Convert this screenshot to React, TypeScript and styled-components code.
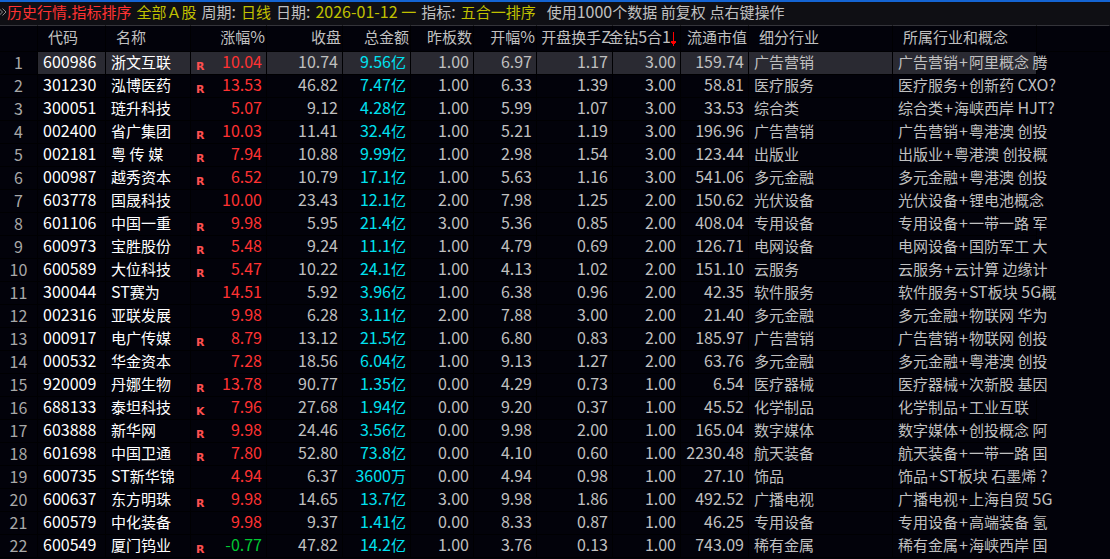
import React from "react";
import styled, { createGlobalStyle } from "styled-components";

const GlobalStyle = createGlobalStyle`
  * { box-sizing: border-box; }
  body {
    margin: 0;
    background: #02020a;
    color: #c0c0c0;
    font-family: "Noto Sans CJK SC", "Liberation Sans", sans-serif;
    font-size: 15px;
  }
`;

const Screen = styled.main`
  min-height: 100vh;
  border-top: 2px solid #1464d2;
  overflow: hidden;
`;

const TitleBar = styled.header`
  display: flex;
  gap: 5px;
  padding: 1px 0 4px;
  background: #0f0f14;
  line-height: 18px;
  white-space: nowrap;
`;

const Title = styled.h1`
  display: flex;
  margin: 0;
  color: #ff3232;
  font-size: 15px;
  font-weight: 400;
`;

const Chevrons = styled.svg`
  width: 7px;
  height: 8px;
  margin-top: 5px;
`;

const Label = styled.span``;

const Value = styled.span`
  color: #c0c000;
`;

const Hint = styled.span`
  margin-left: 6px;
`;

const Table = styled.table`
  width: 100%;
  table-layout: fixed;
  border-collapse: separate;
  border-spacing: 0;
`;

const Col = styled.col<{ $width?: number }>`
  width: ${(p) => (p.$width ? `${p.$width}px` : "auto")};
`;

type Align = "start" | "end";

const HeadCell = styled.th`
  padding: 0 0 4px;
  border-top: 1px solid #34343a;
  border-right: 1px solid #000002;
  border-bottom: 1px solid #000002;
  font-weight: 400;
  line-height: 21px;
  &:last-child { border-right-color: transparent; }
`;

const HeadLabel = styled.div<{ $align: Align }>`
  display: flex;
  align-items: center;
  justify-content: flex-${(p) => p.$align};
  padding: ${(p) => (p.$align === "start" ? "0 0 0 10px" : "0 1px 0 0")};
  white-space: nowrap;
`;

const SortArrow = styled.svg`
  width: 7px;
  height: 14px;
  flex: none;
  margin: 4px 1px 0 0;
`;

const Cell = styled.td<{ $align?: Align; $color?: string }>`
  padding: 1px 4px 3px 5px;
  border-right: 1px solid #000002;
  border-bottom: 1px solid #000002;
  color: ${(p) => p.$color || "#c0c0c0"};
  text-align: ${(p) => p.$align || "end"};
  line-height: 18px;
  white-space: nowrap;
`;

const IndexCell = styled.th`
  padding: 2px 0;
  border-right: 1px solid #000002;
  border-bottom: 1px solid #000002;
  color: #a8a8a8;
  font-weight: 400;
  text-align: center;
  line-height: 18px;
`;

const FillCell = styled.td``;

const Row = styled.tr<{ $selected: boolean }>`
  ${Cell} {
    background: ${(p) => (p.$selected ? "#2a2a32" : "transparent")};
  }
`;

const ChangeBox = styled.div`
  display: flex;
  justify-content: space-between;
`;

const Mark = styled.span`
  height: 18px;
  padding-top: 6px;
  color: #ff5050;
  font: bold 11px/16px "DejaVu Sans", sans-serif;
`;

const Latin = styled.span`
  font-size: 16px;
  line-height: 0;
`;

const Plus = styled(Latin)`
  margin: 0 1px;
`;

// Latin letters and digits are set one size larger than the Chinese text.
function Mixed({ text }: { text: string }) {
  const runs = text.match(/\+|[\x20-\x2a\x2c-\x7e]+|[^\x20-\x7e]+/g) || [];
  return (
    <>
      {runs.map((run, i) =>
        run === "+" ? (
          <Plus key={i}>+</Plus>
        ) : /[\x20-\x7e]/.test(run) ? (
          <Latin key={i}>{run}</Latin>
        ) : (
          <React.Fragment key={i}>{run}</React.Fragment>
        )
      )}
    </>
  );
}

const columns: { label: string; width?: number; align: Align; sorted?: boolean }[] = [
  { label: "", width: 38, align: "end" },
  { label: "代码", width: 68, align: "start" },
  { label: "名称", width: 85, align: "start" },
  { label: "涨幅%", width: 76, align: "end" },
  { label: "收盘", width: 76, align: "end" },
  { label: "总金额", width: 68, align: "end" },
  { label: "昨板数", width: 63, align: "end" },
  { label: "开幅%", width: 63, align: "end" },
  { label: "开盘换手Z", width: 76, align: "end" },
  { label: "金钻5合1", width: 68, align: "end", sorted: true },
  { label: "流通市值", width: 68, align: "end" },
  { label: "细分行业", width: 144, align: "start" },
  { label: "所属行业和概念", width: 144, align: "start" },
  { label: "", align: "start" },
];

// code, name, mark, change, close, amount, boards, open, turnover, score, cap, industry, concepts
const stocks: string[][] = [
  ["600986", "浙文互联", "R", "10.04", "10.74", "9.56亿", "1.00", "6.97", "1.17", "3.00", "159.74", "广告营销", "广告营销+阿里概念 腾"],
  ["301230", "泓博医药", "R", "13.53", "46.82", "7.47亿", "1.00", "6.33", "1.39", "3.00", "58.81", "医疗服务", "医疗服务+创新药 CXO?"],
  ["300051", "琏升科技", "", "5.07", "9.12", "4.28亿", "1.00", "5.99", "1.07", "3.00", "33.53", "综合类", "综合类+海峡西岸 HJT?"],
  ["002400", "省广集团", "R", "10.03", "11.41", "32.4亿", "1.00", "5.21", "1.19", "3.00", "196.96", "广告营销", "广告营销+粤港澳 创投"],
  ["002181", "粤 传 媒", "R", "7.94", "10.88", "9.99亿", "1.00", "2.98", "1.54", "3.00", "123.44", "出版业", "出版业+粤港澳 创投概"],
  ["000987", "越秀资本", "R", "6.52", "10.79", "17.1亿", "1.00", "5.63", "1.16", "3.00", "541.06", "多元金融", "多元金融+粤港澳 创投"],
  ["603778", "国晟科技", "", "10.00", "23.43", "12.1亿", "2.00", "7.98", "1.25", "2.00", "150.62", "光伏设备", "光伏设备+锂电池概念"],
  ["601106", "中国一重", "R", "9.98", "5.95", "21.4亿", "3.00", "5.36", "0.85", "2.00", "408.04", "专用设备", "专用设备+一带一路 军"],
  ["600973", "宝胜股份", "R", "5.48", "9.24", "11.1亿", "1.00", "4.79", "0.69", "2.00", "126.71", "电网设备", "电网设备+国防军工 大"],
  ["600589", "大位科技", "R", "5.47", "10.22", "24.1亿", "1.00", "4.13", "1.02", "2.00", "151.10", "云服务", "云服务+云计算 边缘计"],
  ["300044", "ST赛为", "", "14.51", "5.92", "3.96亿", "1.00", "6.38", "0.96", "2.00", "42.35", "软件服务", "软件服务+ST板块 5G概"],
  ["002316", "亚联发展", "", "9.98", "6.28", "3.11亿", "2.00", "7.88", "3.00", "2.00", "21.40", "多元金融", "多元金融+物联网 华为"],
  ["000917", "电广传媒", "R", "8.79", "13.12", "21.5亿", "1.00", "6.80", "0.83", "2.00", "185.97", "广告营销", "广告营销+物联网 创投"],
  ["000532", "华金资本", "", "7.28", "18.56", "6.04亿", "1.00", "9.13", "1.27", "2.00", "63.76", "多元金融", "多元金融+粤港澳 创投"],
  ["920009", "丹娜生物", "R", "13.78", "90.77", "1.35亿", "0.00", "4.29", "0.73", "1.00", "6.54", "医疗器械", "医疗器械+次新股 基因"],
  ["688133", "泰坦科技", "K", "7.96", "27.68", "1.94亿", "0.00", "9.20", "0.37", "1.00", "45.52", "化学制品", "化学制品+工业互联"],
  ["603888", "新华网", "R", "9.98", "24.46", "3.56亿", "0.00", "9.98", "2.00", "1.00", "165.04", "数字媒体", "数字媒体+创投概念 阿"],
  ["601698", "中国卫通", "R", "7.80", "52.80", "73.8亿", "0.00", "4.10", "0.60", "1.00", "2230.48", "航天装备", "航天装备+一带一路 国"],
  ["600735", "ST新华锦", "", "4.94", "6.37", "3600万", "0.00", "4.94", "0.98", "1.00", "27.10", "饰品", "饰品+ST板块 石墨烯 ?"],
  ["600637", "东方明珠", "R", "9.98", "14.65", "13.7亿", "3.00", "9.98", "1.86", "1.00", "492.52", "广播电视", "广播电视+上海自贸 5G"],
  ["600579", "中化装备", "", "9.98", "9.37", "1.41亿", "0.00", "8.33", "0.87", "1.00", "46.25", "专用设备", "专用设备+高端装备 氢"],
  ["600549", "厦门钨业", "R", "-0.77", "47.82", "14.2亿", "1.00", "3.76", "0.13", "1.00", "743.09", "稀有金属", "稀有金属+海峡西岸 国"],
];

export default function App() {
  return (
    <Screen>
      <GlobalStyle />
      <TitleBar>
        <Title>
          <Chevrons viewBox="0 0 7 8" fill="none" stroke="#8c8c8c" aria-hidden="true">
            <path d="M-1 0.5 L2.5 4 L-1 7.5 M2.5 0.5 L6 4 L2.5 7.5" />
          </Chevrons>
          <span><Mixed text="历史行情.指标排序" /></span>
        </Title>
        <Value>全部Ａ股</Value>
        <Label><Mixed text="周期:" /></Label>
        <Value>日线</Value>
        <Label><Mixed text="日期:" /></Label>
        <Value><Mixed text="2026-01-12 一" /></Value>
        <Label><Mixed text="指标:" /></Label>
        <Value>五合一排序</Value>
        <Hint><Mixed text="使用1000个数据 前复权 点右键操作" /></Hint>
      </TitleBar>
      <Table>
        <colgroup>
          {columns.map((c, i) => (
            <Col key={i} $width={c.width} />
          ))}
        </colgroup>
        <thead>
          <tr>
            {columns.map((c, i) => (
              <HeadCell key={i} scope="col">
                <HeadLabel $align={c.align}>
                  <span><Mixed text={c.label} /></span>
                  {c.sorted && (
                    <SortArrow viewBox="0 0 7 14" aria-hidden="true">
                      <path d="M2 0h1v9h2v2h-1v1h-1v2h-1v-2h-1v-1h-1v-2h2z" fill="#ff0000" />
                    </SortArrow>
                  )}
                </HeadLabel>
              </HeadCell>
            ))}
          </tr>
        </thead>
        <tbody>
          {stocks.map(([code, name, mark, change, close, amount, ...rest], i) => (
            <Row key={code} $selected={i === 0}>
              <IndexCell scope="row"><Mixed text={String(i + 1)} /></IndexCell>
              <Cell $align="start" $color="#ffffff"><Mixed text={code} /></Cell>
              <Cell $align="start" $color="#ffffff"><Mixed text={name} /></Cell>
              <Cell $color={change.startsWith("-") ? "#00c832" : "#ff3232"}>
                <ChangeBox>
                  <Mark>{mark}</Mark>
                  <span><Mixed text={change} /></span>
                </ChangeBox>
              </Cell>
              <Cell><Mixed text={close} /></Cell>
              <Cell $color="#00e1f0"><Mixed text={amount} /></Cell>
              {rest.map((value, j) => (
                <Cell key={j} $align={j < 5 ? "end" : "start"}>
                  <Mixed text={value} />
                </Cell>
              ))}
              <FillCell />
            </Row>
          ))}
        </tbody>
      </Table>
    </Screen>
  );
}
